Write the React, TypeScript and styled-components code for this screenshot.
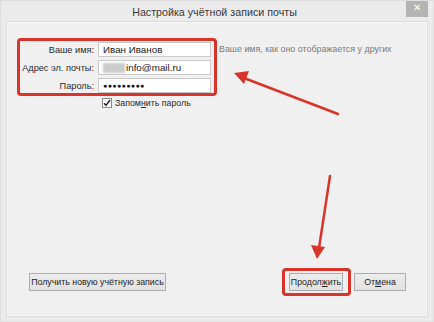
import React from "react";
import styled, { createGlobalStyle } from "styled-components";

const GlobalStyle = createGlobalStyle`
  html, body {
    margin: 0;
    padding: 0;
    background: #ececec;
  }
  body {
    font-family: "Liberation Sans", Arial, sans-serif;
    color: #222;
  }
`;

const Window = styled.div`
  position: relative;
  width: 434px;
  height: 322px;
  box-sizing: border-box;
  background: #ebebeb;
  border: 1px solid #dedede;
  display: flex;
  flex-direction: column;
  overflow: hidden;
`;

const TitleBar = styled.div`
  height: 20px;
  display: grid;
  grid-template-columns: 22px 1fr 22px;
  align-items: start;
  padding-right: 5px;
`;

const Title = styled.div`
  grid-column: 2;
  text-align: center;
  font-size: 10.7px;
  line-height: 23px;
  color: #3a3a3a;
`;

const CloseButton = styled.div`
  width: 22px;
  height: 17px;
  margin-top: -1px;
  background: #b4b4b4;
  color: #fff;
  font-size: 10px;
  line-height: 16px;
  text-align: center;
`;

const Panel = styled.div`
  flex: 1;
  margin: 0 5px 4px 5px;
  background: #f0f0f0;
  border: 1px solid #dcdcdc;
  box-shadow: inset 0 0 0 1px #f7f7f7;
  display: flex;
  flex-direction: column;
  justify-content: space-between;
  padding: 16px 21px 20px 10px;
`;

const FormArea = styled.div`
  display: flex;
  flex-direction: column;
`;

const TopRow = styled.div`
  display: flex;
  align-items: flex-start;
`;

const RedFrame = styled.div`
  border: 3px solid #d9342b;
  border-radius: 4px;
`;

const FieldGrid = styled.div`
  width: 194px;
  padding: 1px 3px 0 0;
  box-sizing: border-box;
  display: grid;
  grid-template-columns: 74px 1fr;
  column-gap: 4px;
  row-gap: 3px;
  align-items: center;
`;

const Label = styled.label`
  font-size: 9.2px;
  text-align: right;
  color: #2a2a2a;
  white-space: nowrap;
`;

const Input = styled.div`
  height: 15px;
  box-sizing: border-box;
  background: #fff;
  border: 1px solid #c9c9c9;
  padding: 0 4px;
  font-size: 9.8px;
  line-height: 13px;
  color: #1a1a1a;
  display: flex;
  align-items: center;
  white-space: nowrap;
  overflow: hidden;
`;

const Blurred = styled.span`
  display: inline-block;
  width: 22px;
  height: 10px;
  margin-right: 1px;
  background: #cbcbcb;
  filter: blur(1px);
`;

const Dots = styled.span`
  font-size: 7px;
  letter-spacing: 0.4px;
  color: #111;
`;

const Hint = styled.div`
  margin: 6px 0 0 2px;
  font-size: 8.9px;
  color: #7a7a7a;
  white-space: nowrap;
`;

const CheckRow = styled.div`
  display: flex;
  align-items: center;
  gap: 3px;
  margin: 2px 0 0 85px;
  font-size: 8.8px;
  color: #2a2a2a;
`;

const CheckBox = styled.span`
  width: 8px;
  height: 8px;
  border: 1px solid #8a8a8a;
  background: #fff;
  display: inline-flex;
  align-items: center;
  justify-content: center;
`;

const ButtonRow = styled.div`
  display: flex;
  align-items: center;
  justify-content: space-between;
  padding-left: 12px;
`;

const RightButtons = styled.div`
  display: flex;
  align-items: center;
  gap: 3px;
`;

const Button = styled.div<{ $width: number }>`
  width: ${(p) => p.$width}px;
  height: 18px;
  box-sizing: border-box;
  border: 1px solid #adadad;
  background: linear-gradient(#ececec, #e2e2e2);
  font-size: 8.8px;
  line-height: 16px;
  text-align: center;
  color: #1e1e1e;
  white-space: nowrap;
`;

const ButtonFrame = styled.div`
  border: 3px solid #d9342b;
  border-radius: 4px;
  padding: 2px 5px 2px 4px;
`;

const Arrows = styled.svg`
  position: absolute;
  left: 0;
  top: 0;
  pointer-events: none;
`;

const Check = () => (
  <svg width="8" height="8" viewBox="0 0 8 8">
    <path d="M1 4.2 L3 6.4 L7 1" fill="none" stroke="#222" strokeWidth="1.4" />
  </svg>
);

export default function App() {
  return (
    <>
      <GlobalStyle />
      <Window>
        <TitleBar>
          <Title>Настройка учётной записи почты</Title>
          <CloseButton>✕</CloseButton>
        </TitleBar>
        <Panel>
          <FormArea>
            <TopRow>
              <RedFrame>
                <FieldGrid>
                  <Label>Ваше имя:</Label>
                  <Input>Иван Иванов</Input>
                  <Label>Адрес эл. почты:</Label>
                  <Input>
                    <Blurred />
                    info@mail.ru
                  </Input>
                  <Label>Пароль:</Label>
                  <Input>
                    <Dots>●●●●●●●●●</Dots>
                  </Input>
                </FieldGrid>
              </RedFrame>
              <Hint>Ваше имя, как оно отображается у других</Hint>
            </TopRow>
            <CheckRow>
              <CheckBox>
                <Check />
              </CheckBox>
              <span>
                Запом<u>н</u>ить пароль
              </span>
            </CheckRow>
          </FormArea>
          <ButtonRow>
            <Button $width={137}>Получить новую учётную запись</Button>
            <RightButtons>
              <ButtonFrame>
                <Button $width={54}>
                  Продол<u>ж</u>ить
                </Button>
              </ButtonFrame>
              <Button $width={52}>
                От<u>м</u>ена
              </Button>
            </RightButtons>
          </ButtonRow>
        </Panel>
        <Arrows width="434" height="322" viewBox="0 0 434 322">
          <line x1="337" y1="113" x2="243" y2="77" stroke="#d9342b" strokeWidth="2.5" strokeLinecap="round" />
          <polygon points="233,72 248,70 243,83" fill="#d9342b" />
          <line x1="329" y1="175" x2="318" y2="247" stroke="#d9342b" strokeWidth="2.5" strokeLinecap="round" />
          <polygon points="316,258 310,244 324,246" fill="#d9342b" />
        </Arrows>
      </Window>
    </>
  );
}
